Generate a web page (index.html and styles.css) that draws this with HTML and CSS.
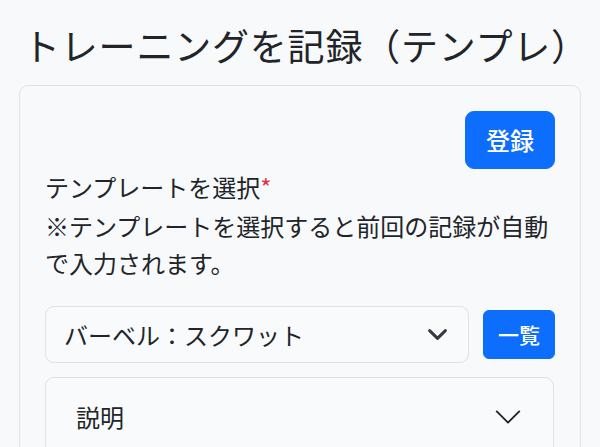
FILE: index.html
```html
<!DOCTYPE html>
<html lang="ja">
<head>
<meta charset="utf-8">
<title>トレーニングを記録（テンプレ）</title>
<link rel="stylesheet" href="styles.css">
</head>
<body>
<div class="container">
  <h1 class="title">トレーニングを記録（テンプレ）</h1>
  <div class="card">
    <div class="actions">
      <button class="btn btn-primary btn-main" type="button">登録</button>
    </div>
    <label class="label">テンプレートを選択<span class="req">*</span></label>
    <p class="note">※テンプレートを選択すると前回の記録が自動で入力されます。</p>
    <div class="select-row">
      <div class="select">
        <span class="select-text">バーベル：スクワット</span>
        <svg class="select-arrow" viewBox="0 0 16 16" width="21" height="21" fill="none" stroke="#343a40" stroke-width="2.3" stroke-linecap="round" stroke-linejoin="round"><path d="m2 5 6 6 6-6"/></svg>
      </div>
      <button class="btn btn-primary btn-small" type="button">一覧</button>
    </div>
    <div class="accordion">
      <div class="acc-btn">
        <span>説明</span>
        <svg class="acc-icon" viewBox="0 0 16 16" width="30" height="30" fill="none" stroke="#212529" stroke-width="1" stroke-linecap="round" stroke-linejoin="round"><path d="M2 5L8 11L14 5"/></svg>
      </div>
      <div class="acc-body"></div>
    </div>
  </div>
</div>
</body>
</html>
```

FILE: styles.css
```css
* {
  box-sizing: border-box;
}

html, body {
  margin: 0;
  padding: 0;
  background: #f8f9fa;
}

body {
  font-family: "Noto Sans CJK JP", "Noto Sans", "Liberation Sans", sans-serif;
  font-size: 24px;
  line-height: 36px;
  color: #212529;
  overflow: hidden;
}

.container {
  padding: 23px 19px 0;
}

.title {
  margin: 0 0 18px 4px;
  font-size: 37px;
  line-height: 44px;
  font-weight: 400;
  letter-spacing: 0.8px;
  color: #212529;
  white-space: nowrap;
}

.card {
  background: #f8f9fa;
  border: 1px solid #dfe2e6;
  border-radius: 9px;
  padding: 25px 25px 40px;
}

.actions {
  display: flex;
  justify-content: flex-end;
}

.btn {
  font-family: inherit;
  border: 1px solid #0d6efd;
  background: #0d6efd;
  color: #fff;
  cursor: pointer;
  font-weight: 500;
}

.btn-main {
  font-size: 24px;
  line-height: 36px;
  padding: 10px 20px;
  border-radius: 9px;
}

.btn-small {
  font-size: 21px;
  line-height: 31px;
  padding: 8px 14px;
  border-radius: 6px;
  flex: none;
}

.label {
  display: block;
  line-height: 36px;
}

.req {
  color: #dc3545;
}

.note {
  margin: 2px 0 0;
  line-height: 37px;
}

.select-row {
  display: flex;
  align-items: center;
  gap: 14px;
  margin-top: 25px;
}

.select {
  flex: 1;
  display: flex;
  align-items: center;
  justify-content: space-between;
  height: 57px;
  padding: 0 20px 0 18px;
  border: 1px solid #dee2e6;
  border-radius: 9px;
  background: #f9fafb;
  color: #212529;
}

.select-arrow {
  display: block;
  flex: none;
}

.accordion {
  margin-top: 14px;
  border: 1px solid #dee2e6;
  border-radius: 9px;
  background: #f9fafb;
  margin-right: 1px;
}

.acc-btn {
  display: flex;
  align-items: center;
  justify-content: space-between;
  padding: 21px 30px 24px;
  color: #212529;
}

.acc-icon {
  display: block;
  flex: none;
}

.acc-body {
  height: 40px;
}
```
